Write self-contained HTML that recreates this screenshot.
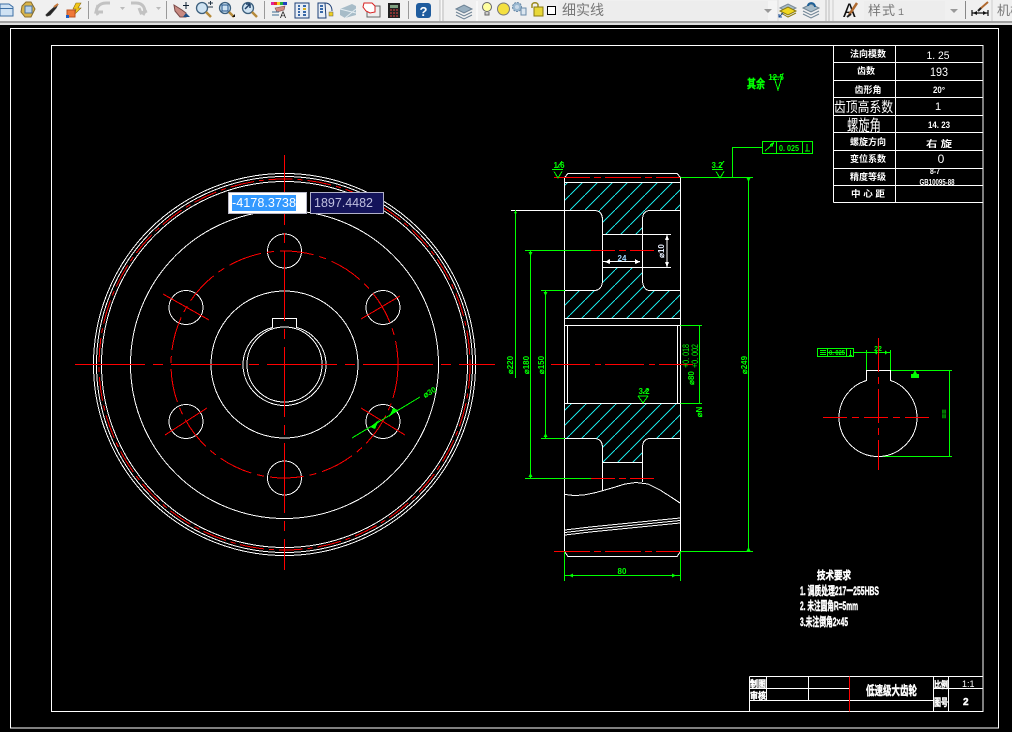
<!DOCTYPE html>
<html><head><meta charset="utf-8"><style>
html,body{margin:0;padding:0;background:#000;width:1012px;height:732px;overflow:hidden}
svg{position:absolute;left:0;top:0;display:block}
.w{stroke:#fff;fill:none;stroke-width:1}
.r{stroke:#f00;fill:none;stroke-width:1}
.g{stroke:#0f0;fill:none;stroke-width:1}
.tw{fill:#fff;font-family:"Liberation Sans","Noto Sans CJK SC",sans-serif}
.tg{fill:#0f0;font-family:"Liberation Sans","Noto Sans CJK SC",sans-serif}
.bold{font-weight:700;stroke:#fff;stroke-width:.45}
</style></head><body>
<svg width="1012" height="732" viewBox="0 0 1012 732" xmlns="http://www.w3.org/2000/svg" shape-rendering="crispEdges">
<defs>
<pattern id="h" patternUnits="userSpaceOnUse" width="15" height="15"><path d="M0 15L15 0" stroke="#19e0e0" stroke-width="1" fill="none" shape-rendering="crispEdges"/></pattern>
</defs>
<rect width="1012" height="732" fill="#000"/>
<!-- toolbar -->
<rect x="0" y="0" width="1012" height="21" fill="#f0f0f0"/>
<rect x="0" y="21" width="1012" height="2" fill="#a0a0a0"/>
<rect x="0" y="23" width="1012" height="2" fill="#e0e0e0"/>
<g shape-rendering="geometricPrecision">
<path d="M0 4H9L13 7V16H0Z" fill="#cfe2f3" stroke="#3d6fa5"/><rect x="0" y="8" width="13" height="1" fill="#3d6fa5"/>
<path d="M22 6L26 2H31L35 9L31 17H25L21 12Z" fill="#d9b44a" stroke="#8a6d2a"/><rect x="25" y="6" width="7" height="7" fill="#b9d3ea" stroke="#4a6f96"/>
<path d="M46 15L50 11L58 4L56 8L50 15L47 16Z" fill="#222" stroke="#333"/><path d="M54 7L58 4" stroke="#c87a3c" stroke-width="2"/>
<path d="M76 3H81L78 8H81L75 14L76 9H73Z" fill="#f2c718" stroke="#8a6a10" stroke-width=".6"/><rect x="67" y="10" width="8" height="7" fill="#f07838" stroke="#b85020"/><rect x="66" y="15" width="3" height="3" fill="#1a5fc8"/>
<rect x="88" y="1" width="1" height="18" fill="#999"/>
<path d="M98 15C94 9 99 3 106 3H110M98 5L96 12L103 12" fill="none" stroke="#c2c2c2" stroke-width="3"/>
<path d="M120 7H125L122.500 10Z" fill="#bbb"/>
<path d="M131 3H136C143 3 147 9 143 15M147 11L141 13L139 8" fill="none" stroke="#c2c2c2" stroke-width="3"/>
<path d="M156 7H161L158.500 10Z" fill="#bbb"/>
<rect x="166" y="1" width="1" height="18" fill="#999"/>
<path d="M174 5L182 10L186 13V17H180L175 11Z" fill="#c88a82" stroke="#7a4a48"/><path d="M186 13L190 17H183Z" fill="#1d4f86"/><path d="M186 2V9M183 5.500H189" stroke="#123" stroke-width="1"/>
<circle cx="202" cy="8" r="5.500" fill="#cfe3f2" stroke="#3c5f7d" stroke-width="1.300"/><path d="M206 12L211 17" stroke="#b58a3a" stroke-width="2.500"/><path d="M208 3H213M210.500 1V5M208 7H213" stroke="#234" />
<circle cx="225" cy="8" r="5.500" fill="#cfe3f2" stroke="#3c5f7d" stroke-width="1.300"/><rect x="222" y="5" width="6" height="6" fill="none" stroke="#1d4f86"/><path d="M229 12L234 17" stroke="#b58a3a" stroke-width="2.500"/><path d="M232 17H235V14Z" fill="#111"/>
<circle cx="248" cy="8" r="5.500" fill="#cfe3f2" stroke="#3c5f7d" stroke-width="1.300"/><path d="M245 9L250 4M250 4H246M250 4V8" stroke="#1d3f66" stroke-width="1.500" fill="none"/><path d="M252 12L257 17" stroke="#b58a3a" stroke-width="2.500"/>
<rect x="264" y="1" width="1" height="18" fill="#999"/>
<rect x="271" y="2" width="3" height="3" fill="#e0209a"/><rect x="274" y="2" width="3" height="3" fill="#e83020"/><rect x="277" y="2" width="3" height="3" fill="#f0d020"/><rect x="280" y="2" width="3" height="3" fill="#20b040"/><rect x="283" y="2" width="4" height="3" fill="#2040c0"/>
<path d="M275 8L285 6L284 10L277 12Z" fill="#d08a80" stroke="#7a4a48" stroke-width=".6"/><path d="M272 12H279M272 15H279" stroke="#3a6a90"/><text x="280" y="18" font-size="9" font-family="Liberation Sans" fill="#222">A</text>
<rect x="295" y="3" width="14" height="15" fill="#e8eef6" stroke="#1d3f76"/><path d="M298 6H300M303 6H306M298 9H300M303 9H306M298 12H300M303 12H306M298 15H300M303 15H306" stroke="#3868a8" stroke-width="2"/><path d="M303 9H306" stroke="#d8b020" stroke-width="2"/>
<path d="M318 3H325L326 18H318Z" fill="#e8eef6" stroke="#1d3f76"/><path d="M320 6H323M320 9H323M320 12H323" stroke="#3868a8" stroke-width="2"/><path d="M325 3C330 3 332 7 332 11" stroke="#1d3f76" fill="none"/><rect x="329" y="12" width="4" height="4" fill="#f0d020" stroke="#555" stroke-width=".5"/>
<path d="M340 9L352 4L356 6V15L345 18L340 15Z" fill="#a7bcc8"/><path d="M340 9L356 13M345 18L356 9" stroke="#e4edf2"/>
<rect x="367" y="6" width="13" height="11" fill="#eee" stroke="#666"/><path d="M364 3H372L375 6V12L370 13L366 11L363 7Z" fill="#fff" stroke="#d82020"/>
<rect x="388" y="3" width="12" height="15" fill="#222"/><rect x="390" y="5" width="8" height="3" fill="#7f9f7f"/><path d="M390 10H392M393 10H395M396 10H398M390 13H392M393 13H395M396 13H398M390 16H392M393 16H395M396 16H398" stroke="#e84040"/>
<rect x="408" y="1" width="1" height="18" fill="#999"/>
<rect x="416" y="3" width="15" height="15" rx="3" fill="#1f5c9e"/><text x="423.500" y="16" font-size="13" font-weight="700" font-family="Liberation Sans" fill="#fff" text-anchor="middle">?</text>
<path d="M440 0V21M443 0V21" stroke="#bbb"/><path d="M441 0V21" stroke="#fff"/>
<path d="M456 9L464 5L472 9L464 13Z" fill="#9ab0c0" stroke="#6d8294"/><path d="M456 12L464 16L472 12M456 15L464 19L472 15" stroke="#6d8294" fill="none"/>
<path d="M477 1V21" stroke="#fff"/>
<circle cx="487" cy="7" r="4.500" fill="#ffffa0" stroke="#666"/><path d="M485 12V15H489V12" fill="#ccc" stroke="#666"/>
<circle cx="503.500" cy="9" r="6" fill="#f4e040" stroke="#777"/>
<circle cx="517" cy="7" r="4.500" fill="#9ab8d0" stroke="#6a8aa8" stroke-dasharray="2 1"/><circle cx="517" cy="7" r="2" fill="#c8d8e8"/><rect x="521" y="8" width="5" height="7" fill="#dbe6f0" stroke="#6a8aa8"/>
<path d="M532 8V5C532 2 538 2 538 5V7" fill="none" stroke="#9a8a20" stroke-width="1.500"/><rect x="534" y="7" width="9" height="9" fill="#e8d838" stroke="#8a7a10"/>
<rect x="547.500" y="6.500" width="8" height="8" fill="#fff" stroke="#000"/>
<rect x="558" y="1" width="210" height="19" fill="#ededed"/>
<text x="562" y="15" font-size="14" font-family="Liberation Sans,Noto Sans CJK SC,sans-serif" fill="#777">细实线</text>
<rect x="768" y="1" width="9" height="19" fill="#f4f4f4"/><path d="M764 9H772L768 13Z" fill="#999"/>
<path d="M778 0V21" stroke="#ddd"/>
<path d="M780 8L788 4L796 8L788 12Z" fill="#a8bcc8" stroke="#7a8a96"/><path d="M780 11L788 15L796 11L788 7Z" fill="#f0d820" stroke="#8a7a10"/><path d="M781 13L788 17L796 13" stroke="#8a7a10" fill="none"/><path d="M779 17L783 13M779 14V17H782" stroke="#1d4f96" fill="none"/>
<path d="M803 8L811 4L819 8L811 12Z" fill="#a8bcc8" stroke="#6f8494"/><path d="M803 11L811 15L819 11M803 14L811 18L819 14" stroke="#6f8494" fill="none"/><path d="M808 6C808 2 815 2 815 7" stroke="#1d5f96" stroke-width="2" fill="none"/>
<path d="M826 0V21M829 0V21" stroke="#bbb"/><path d="M833 0V21" stroke="#ccc"/>
<text x="843" y="17" font-size="19" font-family="Liberation Sans" fill="#111">A</text><path d="M849 15L857 3" stroke="#b06a30" stroke-width="2.500"/><path d="M847 17L851 14" stroke="#222" stroke-width="2"/>
<rect x="864" y="1" width="81" height="19" fill="#ededed"/>
<text x="868" y="15" font-size="13" font-family="Liberation Sans,Noto Sans CJK SC,sans-serif" fill="#777" letter-spacing="1">样式</text><text x="898" y="15" font-size="10" font-family="Liberation Mono" fill="#777">1</text>
<path d="M950 9H958L954 13Z" fill="#999"/>
<rect x="965" y="1" width="1" height="18" fill="#888"/>
<path d="M972 13H988M972 10V16M988 10V16" stroke="#111" stroke-width="1.200"/><path d="M973 13L977 11V15ZM987 13L983 11V15Z" fill="#111"/><path d="M980 9L988 2" stroke="#b06a30" stroke-width="2"/><path d="M978 11L981 8" stroke="#222" stroke-width="2"/>
<path d="M992 0V21" stroke="#ccc"/>
<text x="997" y="15" font-size="13" font-family="Liberation Sans,Noto Sans CJK SC,sans-serif" fill="#777">机械</text>
</g>
<!-- frames -->
<g>
<rect x="10.500" y="28.500" width="988" height="699.500" class="w"/>
<rect x="51.500" y="45.500" width="931.500" height="666" class="w"/>
<!-- table -->
<path class="w" d="M833.500 45.500V202.500M895.500 45.500V202.500M833.500 62.500H983M833.500 80.500H983M833.500 97.500H983M833.500 115.500H983M833.500 132.500H983M833.500 150.500H983M833.500 168.500H983M833.500 185.500H983M833.500 202.500H983"/>
<!-- title block -->
<path class="w" d="M749.500 676.500H983M749.500 676.500V711.500M749.500 688.500H849M749.500 700.500H933M766.500 676.500V700.500M808.500 676.500V700.500M933.500 676.500V711.500M948.500 676.500V711.500M933.500 688.500H983"/>
<path class="r" d="M849.500 676.500V711.500"/>
</g>
<g class="tw" text-anchor="middle">
<g font-size="9" font-weight="700">
<text x="868" y="57" textLength="36" lengthAdjust="spacingAndGlyphs">法向模数</text>
<text x="866" y="74" textLength="18" lengthAdjust="spacingAndGlyphs">齿数</text>
<text x="868" y="93" textLength="27" lengthAdjust="spacingAndGlyphs">齿形角</text>
<text x="868" y="145" textLength="36" lengthAdjust="spacingAndGlyphs">螺旋方向</text>
<text x="868" y="162" textLength="36" lengthAdjust="spacingAndGlyphs">变位系数</text>
<text x="868" y="180" textLength="36" lengthAdjust="spacingAndGlyphs">精度等级</text>
<text x="868" y="197" textLength="34" lengthAdjust="spacingAndGlyphs">中 心 距</text>
<text x="939" y="93" textLength="12" lengthAdjust="spacingAndGlyphs">20°</text>
<text x="939" y="128" textLength="22" lengthAdjust="spacingAndGlyphs">14. 23</text>
<text x="939" y="147" textLength="26" lengthAdjust="spacingAndGlyphs">右  旋</text>
<text x="935" y="174" font-size="8" textLength="10" lengthAdjust="spacingAndGlyphs">8-7</text>
<text x="937" y="185" font-size="8" textLength="35" lengthAdjust="spacingAndGlyphs">GB10095-88</text>
</g>
<text x="863.500" y="112" font-size="14" textLength="59" lengthAdjust="spacingAndGlyphs">齿顶高系数</text>
<text x="864" y="131" font-size="16" textLength="34" lengthAdjust="spacingAndGlyphs">螺旋角</text>
<text x="938" y="59" font-size="11" textLength="23" lengthAdjust="spacingAndGlyphs">1. 25</text>
<text x="939" y="76" font-size="12" textLength="18" lengthAdjust="spacingAndGlyphs">193</text>
<text x="938" y="110" font-size="11">1</text>
<text x="941" y="163" font-size="12">0</text>
</g>
<!-- left view -->
<g class="w" stroke-width="1">
<circle cx="284.500" cy="364.500" r="191"/>
<circle cx="284.500" cy="364.500" r="188"/>
<circle cx="284.500" cy="364.500" r="183"/>
<circle cx="284.500" cy="364.500" r="154"/>
<circle cx="284.500" cy="364.500" r="73.500"/>
<path d="M272.500 327.500V318.500H296.500V327.500C314 332 326 348 326 364.500C326 387 307 405.500 284.500 405.500C262 405.500 243 387 243 364.500C243 348 255 332 272.500 327.500Z"/>
<circle cx="284.500" cy="364.500" r="37.500"/>
<circle cx="284.500" cy="251" r="17"/>
<circle cx="186" cy="307.500" r="17"/>
<circle cx="383" cy="307.500" r="17"/>
<circle cx="186" cy="421.500" r="17"/>
<circle cx="383" cy="421.500" r="17"/>
<circle cx="284.500" cy="478" r="17"/>
</g>
<circle cx="284.500" cy="364.500" r="185.500" class="r" stroke-dasharray="24 5 5 5"/>
<circle cx="284.500" cy="364.500" r="113.500" class="r" stroke-dasharray="34 6 7 6"/>
<path class="r" d="M163 294L209 320M361 319L400 296M165 435L207 408M361 408L405 435"/>
<path class="r" d="M75 364.500H495" stroke-dasharray="70 8 10 8"/>
<path class="r" d="M284.500 155V570" stroke-dasharray="70 8 10 8"/>
<path class="g" d="M352 438L420 397"/><path d="M370 427L379 420L375 429ZM398 410L389 417L393 408Z" fill="#0f0"/>
<text x="425" y="398" class="tg" font-size="8" font-weight="700" transform="rotate(-30 425 398)">⌀30</text>
<!-- input labels -->
<rect x="228.500" y="192.500" width="78" height="21" fill="#fff" stroke="#b8b8c8"/>
<rect x="232" y="195" width="64" height="16" fill="#3399ff"/>
<text x="232" y="207" font-size="13" font-family="Liberation Sans,sans-serif" fill="#fff" textLength="64" lengthAdjust="spacingAndGlyphs">-4178.3738</text>
<rect x="310.500" y="192.500" width="73" height="21" fill="#14145a" stroke="#b0b0c8"/>
<text x="314" y="207" font-size="13" font-family="Liberation Sans,sans-serif" fill="#c0c0e0" textLength="59" lengthAdjust="spacingAndGlyphs">1897.4482</text>
<!-- right view -->
<g>
<path fill="url(#h)" d="M565 182.500H680V210.500H650C645 210.500 642.500 214 642.500 220V234.500H602.500V220C602.500 214 600 210.500 594 210.500H565Z"/>
<path fill="url(#h)" d="M602.500 267.500H642.500V280C642.500 286 645 290.500 650 290.500H680V318.500H565V290.500H594C600 290.500 602.500 286 602.500 280Z"/>
<path fill="url(#h)" d="M565 403.500H680V438.500H650C645 438.500 642.500 442 642.500 448V462.500H602.500V448C602.500 442 600 438.500 594 438.500H565Z"/>
</g>
<g class="w">
<path d="M564.500 177.500L568 173.500H677L680.500 177.500V551.500L677 556.500H568L564.500 551.500Z"/>
<path d="M564.500 182.500H680.500M564.500 318.500H680.500"/>
<path d="M564.500 210.500H594C600 210.500 602.500 214 602.500 220V280C602.500 286 600 290.500 594 290.500H564.500"/>
<path d="M680.500 210.500H650C645 210.500 642.500 214 642.500 220V280C642.500 286 645 290.500 650 290.500H680.500"/>
<path d="M602.500 234.500H671M602.500 267.500H671M667 234.500V267.500M603 261.500H640"/>
<path d="M567.500 325.500V403.500M677.500 325.500V403.500M564.500 325.500H680.500M564.500 403.500H680.500"/>
<path d="M564.500 438.500H594C600 438.500 602.500 442 602.500 448V491M680.500 438.500H650C645 438.500 642.500 442 642.500 448V482M602.500 462.500H642.500"/>
<path stroke-width="1" d="M565 494.500L574 495.500L584 495L596 492.500L612 488L625 484L636 482.500L648 484L660 490L671 497L680 503"/>
<path stroke-width="1" d="M565 530L590 527L640 522L680 518M565 532.500L590 529.500L640 524.500L680 520.500M565 535L590 532L640 527L680 523"/>
</g>
<path d="M605 262L610 259V264ZM640 262L635 259V264ZM667 234.500L665 240H669ZM667 267.500L665 262H669Z" fill="#fff"/>
<text x="622" y="261" font-size="8" font-weight="700" font-family="Liberation Sans" fill="#9fd8ff" text-anchor="middle">24</text>
<text x="664" y="251" font-size="8" font-weight="700" font-family="Liberation Sans" fill="#e8f0ff" text-anchor="middle" transform="rotate(-90 664 251)">⌀10</text>
<path class="r" d="M554 177.500H680" stroke-dasharray="36 4 7 4"/>
<path class="r" d="M554 551.500H680" stroke-dasharray="36 4 7 4"/>
<path class="r" d="M551 364.500H693" stroke-dasharray="39 5 6 4"/>
<path class="r" d="M591 250.500H655" stroke-dasharray="24 4 7 4"/>
<path class="r" d="M591 478.500H655" stroke-dasharray="24 4 7 4"/>
<path class="w" d="M511 210.500H564"/>
<g class="g">
<path d="M515.500 210V378M530.500 250.500V478M545.500 290.500V438.500M525 250.500H591M541 290.500H565M541 438.500H565M525 478.500H591"/>
<path d="M748.500 177V551.500M680.500 177.500H753M680.500 551.500H753M732.500 147V177.500M732.500 147.500H762"/>
<path d="M699.500 325.500V403.500M680.500 325.500H702M680.500 403.500H702"/>
<path d="M564.500 551.500V581M680.500 551.500V581M564.500 575.500H680.500"/>
<rect x="762.500" y="141.500" width="50" height="12"/><path d="M776.500 141.500V153.500M802.500 141.500V153.500"/>
<path d="M554 171.500L558 178L562 171.500M552 169.500H563M557 168L562 161M716 171.500L720 178L724 171.500M712 169.500H723M719 168L724 161M638 396L643 403L648 396M638 396H648M643 393L648 389"/>
<path d="M817.500 348.500H853.500V356.500H817.500ZM827.500 348.500V356.500M846.500 348.500V356.500M853.500 352.500H866M866.500 350V370.500M890.500 350V370.500M866.500 352.500H890.500M890.500 370.500H952M878 456.500H952M949.500 370.500V456.500"/>
<path d="M774 77L778 90L783 73M770 77H783"/>
</g>
<path d="M515.500 215l-1.500 -3h3zM748.500 182l-2 -4h4zM748.500 547l-2 4h4zM569 575.500l4 -2v4zM676 575.500l-4 -2v4zM530.500 256l-2 -4h4zM530.500 473l-2 4h4zM545.500 296l-2 -4h4zM545.500 433l-2 4h4zM874 352.500l3 -2v4zM888 352.500l-3 -2v4zM911 378h8v-4h-2l-2 -4l-2 4h-2z" fill="#0f0"/>
<g class="tg" font-weight="700">
<text x="622" y="574" font-size="8" text-anchor="middle">80</text>
<text x="513" y="365" font-size="8" text-anchor="middle" transform="rotate(-90 513 365)">⌀220</text>
<text x="529" y="365" font-size="8" text-anchor="middle" transform="rotate(-90 529 365)">⌀180</text>
<text x="544" y="365" font-size="8" text-anchor="middle" transform="rotate(-90 544 365)">⌀150</text>
<text x="747" y="365" font-size="8" text-anchor="middle" transform="rotate(-90 747 365)">⌀249</text>
<text x="689" y="356" font-size="9" text-anchor="middle" transform="rotate(-90 689 356)" font-weight="400" textLength="24" lengthAdjust="spacingAndGlyphs">+0. 018</text>
<text x="698" y="356" font-size="9" text-anchor="middle" transform="rotate(-90 698 356)" font-weight="400" textLength="24" lengthAdjust="spacingAndGlyphs">+0. 002</text>
<text x="694" y="378" font-size="8" text-anchor="middle" transform="rotate(-90 694 378)">⌀80</text>
<text x="702" y="412" font-size="8" text-anchor="middle" transform="rotate(-90 702 412)">⌀N</text>
<text x="559" y="168" font-size="8" text-anchor="middle">1.6</text>
<text x="717" y="168" font-size="8" text-anchor="middle">3.2</text>
<text x="644" y="394" font-size="8" text-anchor="middle">3.2</text>
<text x="756" y="88" font-size="12" text-anchor="middle" textLength="18" lengthAdjust="spacingAndGlyphs" stroke="#0f0" stroke-width=".4">其余</text>
<text x="776" y="80" font-size="8" text-anchor="middle">12.5</text>
<text x="789" y="151" font-size="8" textLength="20" lengthAdjust="spacingAndGlyphs" text-anchor="middle">0. 025</text>
<text x="837" y="355" font-size="7" text-anchor="middle" textLength="16" lengthAdjust="spacingAndGlyphs">0. 025</text>
<text x="878" y="351" font-size="7" text-anchor="middle">22</text>
<text x="947" y="414" font-size="8" text-anchor="middle" transform="rotate(-90 947 414)">==</text>
</g>
<path d="M765 151L774 143M770 145L773 143L772 147M807 151V144M805 151H810M828 352.500H845M820 352.500H826M820 350.500H826M820 354.500H826M849 355.500H852M850.500 350V355" stroke="#0f0" fill="none"/>
<!-- keyway detail -->
<path class="w" d="M866.500 370.500H890.500V380.500C905 385 917 400 917 417.500C917 439 899 456.500 878 456.500C857 456.500 839 439 839 417.500C839 400 851 385 866.500 380.500Z"/>
<path class="r" d="M878.500 338V470" stroke-dasharray="34 5 7 5"/>
<path class="r" d="M823 417.500H934" stroke-dasharray="24 5 7 5"/>
<!-- notes -->
<g class="tw bold">
<text x="817" y="579" font-size="11" textLength="34" lengthAdjust="spacingAndGlyphs">技术要求</text>
<text x="800" y="595" font-size="12" textLength="79" lengthAdjust="spacingAndGlyphs">1. 调质处理217一255HBS</text>
<text x="800" y="610" font-size="12" textLength="58" lengthAdjust="spacingAndGlyphs">2. 未注圆角R=5mm</text>
<text x="800" y="626" font-size="12" textLength="48" lengthAdjust="spacingAndGlyphs">3.未注倒角2×45</text>
<text x="866" y="695" font-size="12.500" textLength="51" lengthAdjust="spacingAndGlyphs">低速级大齿轮</text>
<text x="750" y="687" font-size="9" textLength="16" lengthAdjust="spacingAndGlyphs">制图</text>
<text x="750" y="699" font-size="9" textLength="16" lengthAdjust="spacingAndGlyphs">审核</text>
<text x="934" y="688" font-size="9" textLength="14" lengthAdjust="spacingAndGlyphs">比例</text>
<text x="934" y="706" font-size="10" textLength="14" lengthAdjust="spacingAndGlyphs">图号</text>
<text x="962" y="687" font-size="9" stroke="none" font-weight="400">1:1</text>
<text x="963" y="705" font-size="10">2</text>
</g>
</svg>
</body></html>
